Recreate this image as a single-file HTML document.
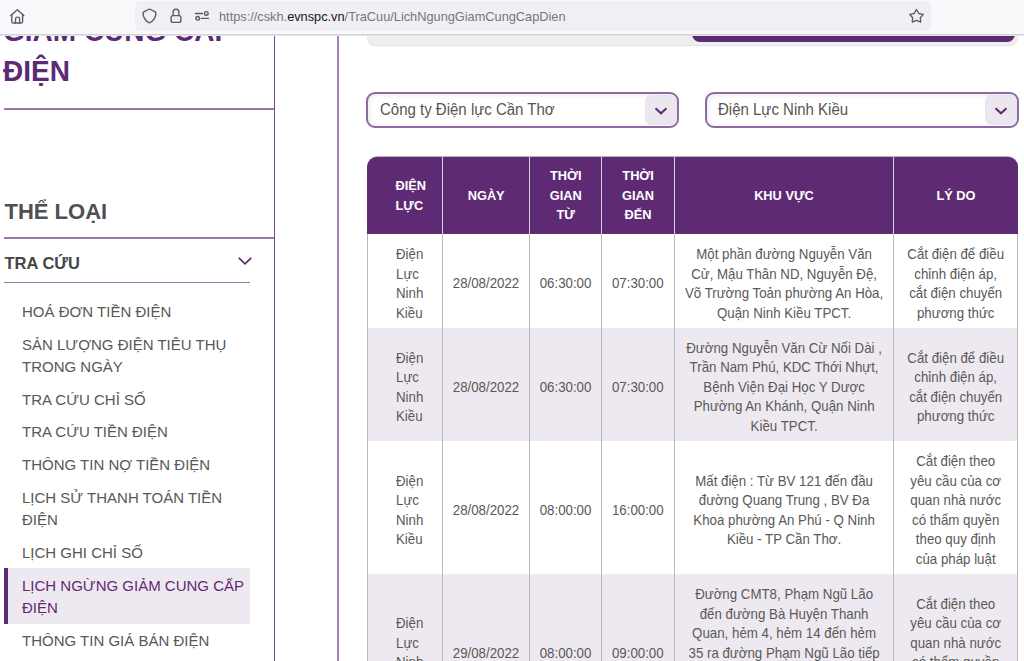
<!DOCTYPE html>
<html><head><meta charset="utf-8">
<style>
*{box-sizing:border-box;margin:0;padding:0}
html,body{width:1024px;height:661px;overflow:hidden;background:#fff;font-family:"Liberation Sans",sans-serif}
.abs{position:absolute}
#tb{position:absolute;left:0;top:0;width:1024px;height:35px;background:#f9f9fb;border-bottom:1px solid #d5d5d7;box-shadow:0 1px 0 #e3e3e3;z-index:10}
#url{position:absolute;left:135px;top:1px;width:796px;height:30px;background:#f0f0f4;border-radius:6px}
#urltxt{position:absolute;left:219px;top:9.3px;font-size:12.78px;color:#75757d;white-space:nowrap;line-height:16px}
#urltxt b{font-weight:normal;color:#15141a}
.ico{position:absolute;fill:none;stroke:#5b5b66;stroke-width:1.4;stroke-linecap:round;stroke-linejoin:round}
#h1{position:absolute;left:3px;top:11.1px;font-size:28px;font-weight:bold;color:#5c2a76;line-height:37px;white-space:nowrap;transform:scaleY(1.07);transform-origin:0 0}
.hl{position:absolute;height:2px;background:#9777aa}
.vl{position:absolute;width:1.5px;top:35px;height:626px}
#cat{position:absolute;left:4.5px;top:199.3px;font-size:22px;font-weight:bold;color:#505050;white-space:nowrap}
#tra{position:absolute;left:4.5px;top:254px;font-size:16.5px;font-weight:bold;color:#454545;white-space:nowrap}
.mi{position:absolute;left:22px;font-size:15.5px;color:#585858;line-height:22px;white-space:nowrap;transform:scaleX(.9677);transform-origin:0 0}
.mi.act{color:#5f2b74}
#tabs{position:absolute;left:366.6px;top:10px;width:651.2px;height:35px;background:#eeeeee;border-radius:8px;box-shadow:0 .5px 1px rgba(0,0,0,.12)}
#tabact{position:absolute;left:692px;top:10px;width:323px;height:31.5px;background:#5f2a74;border-radius:8px}
.dd{position:absolute;top:92.2px;height:35.8px;border:2px solid #8d6aa3;border-radius:9px;background:#fff;box-shadow:inset 1px 1px 5px rgba(0,0,0,.10)}
.dd .t{position:absolute;left:11.4px;top:5.5px;font-size:16px;color:#555;line-height:20px;white-space:nowrap;transform:scaleX(.9375);transform-origin:0 0}
.dd .cb{position:absolute;right:0.2px;top:0.6px;width:32px;height:30.2px;background:#ece6ef;border-radius:7px;box-shadow:inset 0 0 2px rgba(0,0,0,.06)}
.dd svg{position:absolute;left:9.2px;top:12.4px}
#tbl{position:absolute;left:366.5px;top:156.8px;width:651px;border-collapse:collapse;table-layout:fixed;font-size:13.3px;line-height:19.5px;color:#595959}
#tbl th{background:#5f2a74;color:#fff;font-weight:bold;font-size:12.8px;height:77.2px;text-align:center;vertical-align:middle;border-left:1px solid #d9d2dc;padding:0.4px 4px 0}
#tbl th:first-child{border-left:none;border-top-left-radius:10px;text-align:left;padding-left:28.5px}
#tbl th:last-child{border-top-right-radius:10px}
#tbl th{box-shadow:0 -0.8px 0 rgba(90,90,90,.55)}
#tbl td{text-align:center;vertical-align:middle;border-left:1px solid #b9b9b9;padding:6.3px 4px 0;white-space:nowrap}
#tbl td:last-child{border-right:1px solid #b9b9b9}
#tbl td:first-child{text-align:left;padding-left:28.5px}
#tbl tr.alt td{background:#eee9f0}
#tbl td .c{margin:0 -30px;font-size:14.2px;transform:scaleX(.9366);transform-origin:50% 0}
#tbl td:first-child .c{margin:0 -30px 0 0;transform-origin:0 0}
</style></head><body>
<div id="h1">GIẢM CUNG CẤP<br>ĐIỆN</div>
<div class="hl" style="left:4px;top:108px;width:270px"></div>
<div class="vl" style="left:274px;width:1.1px;background:#704a88"></div>
<div class="vl" style="left:337px;background:#a184b4"></div>
<div id="cat">THỂ LOẠI</div>
<div class="hl" style="left:4px;top:237px;width:270px;height:1.5px"></div>
<div id="tra">TRA CỨU</div>
<svg class="abs" style="left:237px;top:255px" width="16" height="12" viewBox="0 0 16 12"><path d="M2.3 3.3 L8 8.8 L13.7 3.3" fill="none" stroke="#5f2b74" stroke-width="1.8" stroke-linecap="round"/></svg>
<div class="hl" style="left:4px;top:281.6px;width:246px;height:1.8px"></div>
<div class="mi" style="top:301px">HOÁ ĐƠN TIỀN ĐIỆN</div>
<div class="mi" style="top:333.8px">SẢN LƯỢNG ĐIỆN TIÊU THỤ<br>TRONG NGÀY</div>
<div class="mi" style="top:388.6px">TRA CỨU CHỈ SỐ</div>
<div class="mi" style="top:421.4px">TRA CỨU TIỀN ĐIỆN</div>
<div class="mi" style="top:454.2px">THÔNG TIN NỢ TIỀN ĐIỆN</div>
<div class="mi" style="top:487px">LỊCH SỬ THANH TOÁN TIỀN<br>ĐIỆN</div>
<div class="mi" style="top:541.8px">LỊCH GHI CHỈ SỐ</div>
<div class="abs" style="left:4px;top:568.4px;width:246px;height:55.2px;background:#eee9f0;border-left:4px solid #5b2a75"></div>
<div class="mi act" style="top:574.6px">LỊCH NGỪNG GIẢM CUNG CẤP<br>ĐIỆN</div>
<div class="mi" style="top:629.6px">THÔNG TIN GIÁ BÁN ĐIỆN</div>

<div id="tabs"></div>
<div id="tabact"></div>

<div class="dd" style="left:366.2px;width:313.2px"><div class="t">Công ty Điện lực Cần Thơ</div><div class="cb"><svg width="14" height="9" viewBox="0 0 14 9"><path d="M1.5 1.2 L7 6.3 L12.5 1.2" fill="none" stroke="#5b2a77" stroke-width="2"/></svg></div></div>
<div class="dd" style="left:705px;width:314px"><div class="t">Điện Lực Ninh Kiều</div><div class="cb"><svg width="14" height="9" viewBox="0 0 14 9"><path d="M1.5 1.2 L7 6.3 L12.5 1.2" fill="none" stroke="#5b2a77" stroke-width="2"/></svg></div></div>

<table id="tbl">
<colgroup><col style="width:75.7px"><col style="width:87px"><col style="width:72.1px"><col style="width:72.6px"><col style="width:219.2px"><col style="width:124.4px"></colgroup>
<tr><th>ĐIỆN<br>LỰC</th><th>NGÀY</th><th>THỜI<br>GIAN<br>TỪ</th><th>THỜI<br>GIAN<br>ĐẾN</th><th>KHU VỰC</th><th>LÝ DO</th></tr>
<tr style="height:94px"><td><div class="c">Điện<br>Lực<br>Ninh<br>Kiều</div></td><td><div class="c">28/08/2022</div></td><td><div class="c">06:30:00</div></td><td><div class="c">07:30:00</div></td><td><div class="c">Một phần đường Nguyễn Văn<br>Cử, Mậu Thân ND, Nguyễn Đệ,<br>Võ Trường Toản phường An Hòa,<br>Quận Ninh Kiều TPCT.</div></td><td><div class="c">Cắt điện để điều<br>chỉnh điện áp,<br>cắt điện chuyển<br>phương thức</div></td></tr>
<tr class="alt" style="height:113px"><td><div class="c">Điện<br>Lực<br>Ninh<br>Kiều</div></td><td><div class="c">28/08/2022</div></td><td><div class="c">06:30:00</div></td><td><div class="c">07:30:00</div></td><td><div class="c">Đường Nguyễn Văn Cừ Nối Dài ,<br>Trần Nam Phú, KDC Thới Nhựt,<br>Bệnh Viện Đại Học Y Dược<br>Phường An Khánh, Quận Ninh<br>Kiều TPCT.</div></td><td><div class="c">Cắt điện để điều<br>chỉnh điện áp,<br>cắt điện chuyển<br>phương thức</div></td></tr>
<tr style="height:133px"><td><div class="c">Điện<br>Lực<br>Ninh<br>Kiều</div></td><td><div class="c">28/08/2022</div></td><td><div class="c">08:00:00</div></td><td><div class="c">16:00:00</div></td><td><div class="c">Mất điện : Từ BV 121 đến đầu<br>đường Quang Trung , BV Đa<br>Khoa phường An Phú - Q Ninh<br>Kiều - TP Cần Thơ.</div></td><td><div class="c">Cắt điện theo<br>yêu cầu của cơ<br>quan nhà nước<br>có thẩm quyền<br>theo quy định<br>của pháp luật</div></td></tr>
<tr class="alt" style="height:152.5px"><td><div class="c">Điện<br>Lực<br>Ninh<br>Kiều</div></td><td><div class="c">29/08/2022</div></td><td><div class="c">08:00:00</div></td><td><div class="c">09:00:00</div></td><td><div class="c">Đường CMT8, Phạm Ngũ Lão<br>đến đường Bà Huyện Thanh<br>Quan, hẻm 4, hẻm 14 đến hẻm<br>35 ra đường Phạm Ngũ Lão tiếp<br>tục đến đường Bà Huyện<br>Thanh Quan TPCT<br>TPCT.</div></td><td><div class="c">Cắt điện theo<br>yêu cầu của cơ<br>quan nhà nước<br>có thẩm quyền<br>theo quy định<br>của pháp luật</div></td></tr>
</table>

<div id="tb">
  <div id="url"></div>
  <svg class="ico" style="left:0;top:0" width="1024" height="34" viewBox="0 0 1024 34">
    <path d="M10.8 15.6 L17.35 9.8 L23.8 15.6"/>
    <path d="M11.8 14.6 V21.4 Q11.8 23 13.4 23 H21 Q22.6 23 22.6 21.4 V14.6"/>
    <path d="M15.5 23 V18.9 Q15.5 17.1 17.55 17.1 Q19.6 17.1 19.6 18.9 V23"/>
    <path d="M149.5 9 L155.2 11.9 Q155.9 12.3 155.9 13 C155.9 17.6 153.6 20.9 149.5 22.9 C145.4 20.9 143.1 17.6 143.1 13 Q143.1 12.3 143.8 11.9 Z"/>
    <rect x="171.1" y="15.6" width="9.8" height="6.8" rx="2"/>
    <path d="M173.1 15.6 V12.2 Q173.1 9.2 176 9.2 Q178.9 9.2 178.9 12.2 V15.6"/>
    <path d="M195.5 13.5 H202.6 M201.3 18.4 H208.4"/>
    <circle cx="206.3" cy="13.4" r="1.8"/>
    <circle cx="197.7" cy="18.3" r="1.8"/>
    <path d="M916.5 9.5 L918.8 13.5 L923.3 14.4 L920.3 17.7 L920.7 22.1 L916.5 20.4 L912.3 22.1 L912.7 17.7 L909.7 14.4 L914.2 13.5 Z"/>
  </svg>
  <div id="urltxt">https://cskh.<b>evnspc.vn</b>/TraCuu/LichNgungGiamCungCapDien</div>
</div>
</body></html>
